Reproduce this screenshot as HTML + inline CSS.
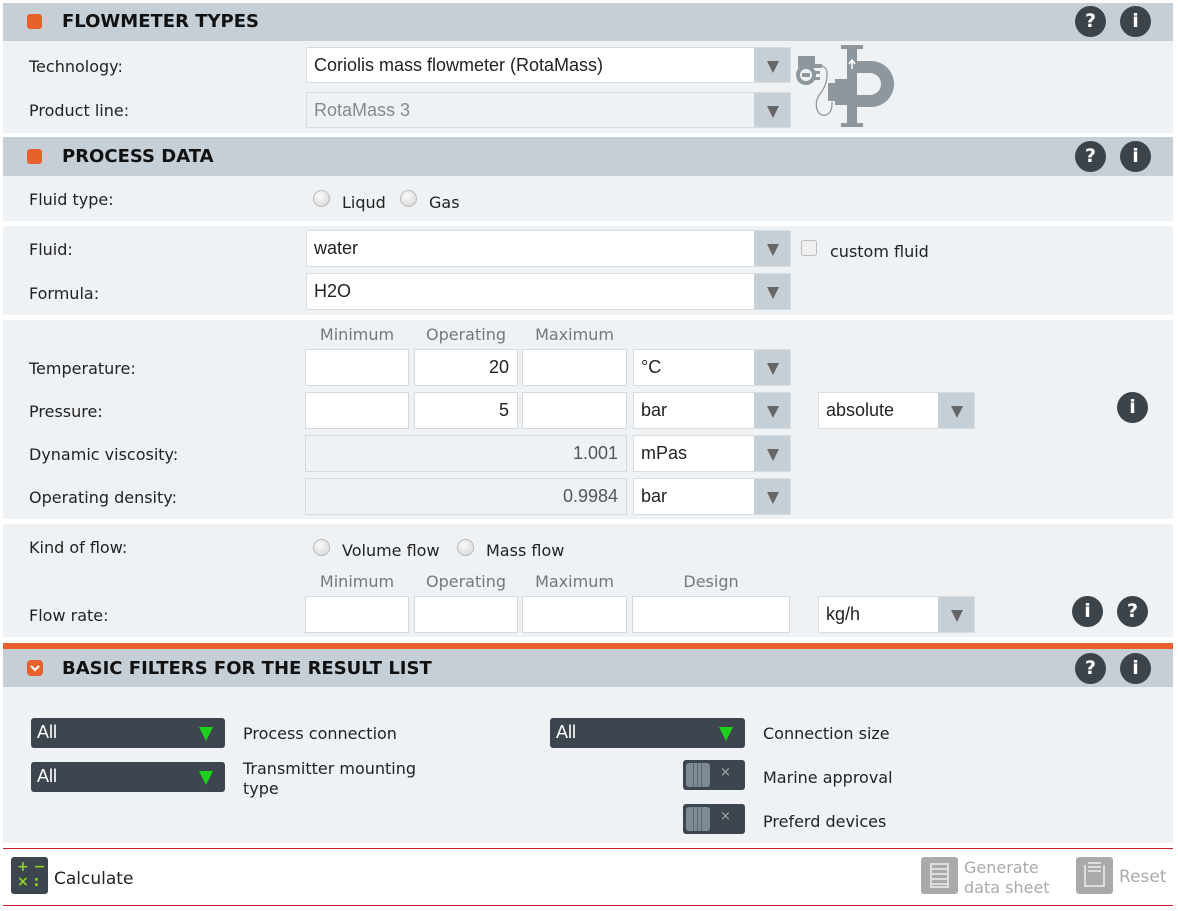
<!DOCTYPE html>
<html><head><style>
*{box-sizing:border-box;margin:0;padding:0}
body{width:1178px;height:911px;background:#fff;font-family:"DejaVu Sans","Liberation Sans",sans-serif;font-size:16px;color:#222;position:relative;overflow:hidden}
.a{position:absolute}
.hd{position:absolute;left:3px;width:1170px;background:#c6ced6}
.hd b{position:absolute;left:59px;font-size:18px;font-weight:bold;color:#111;letter-spacing:0}
.sq{position:absolute;left:24px;width:15px;height:15px;background:#e8602c;border-radius:3px}
.bd{position:absolute;left:3px;width:1170px;background:#eef2f5}
.ic{position:absolute;width:31px;height:31px;border-radius:50%;background:#3c4349;color:#fff;font:bold 19px "DejaVu Sans",sans-serif;text-align:center;line-height:31px}
.lb{position:absolute;left:29px;font-size:16px;color:#222}
.sel{position:absolute;background:#fff;border:1px solid #d8dde2;font-family:"Liberation Sans",sans-serif;font-size:18px;padding-left:7px;line-height:34px;color:#222}
.sel::after{content:"";position:absolute;right:0;top:0;bottom:0;width:36px;background:#c6ced6}
.sel i{position:absolute;right:11px;top:13px;width:0;height:0;border-left:6px solid transparent;border-right:6px solid transparent;border-top:12px solid #666;z-index:2}
.in{position:absolute;background:#fff;border:1px solid #d3d9de;font-family:"Liberation Sans",sans-serif;font-size:18px;text-align:right;padding-right:8px;line-height:34px;height:37px}
.ro{background:#eef2f5;color:#555}
.cap{position:absolute;font-size:16px;color:#777;text-align:center}
.rd{position:absolute;width:17px;height:17px;border-radius:50%;background:radial-gradient(circle at 40% 35%,#fafafa,#d4d4d4);border:1px solid #bbb}
.dk{position:absolute;background:#3d464e;border-radius:3px;color:#fff;font-family:"Liberation Sans",sans-serif;font-size:18px;padding-left:6px;line-height:28px;height:30px}
.dk i{position:absolute;right:12px;top:9px;border-left:7px solid transparent;border-right:7px solid transparent;border-top:14px solid #1fd11f}
.tg{position:absolute;width:62px;height:30px;background:#3d464e;border-radius:3px}
.tg::before{content:"";position:absolute;left:3px;top:3px;width:24px;height:24px;border-radius:3px;background:#7e8a94;background-image:linear-gradient(90deg,transparent 7px,#5c666e 7px,#5c666e 8px,transparent 8px,transparent 11px,#5c666e 11px,#5c666e 12px,transparent 12px,transparent 15px,#5c666e 15px,#5c666e 16px,transparent 16px)}
.tg::after{content:"×";position:absolute;left:37px;top:5px;color:#aaa;font-size:13px}
</style></head><body>

<div class="hd" style="top:3px;height:38px"><div class="sq" style="top:11px"></div><b style="top:8px">FLOWMETER TYPES</b></div>
<div class="ic" style="left:1075px;top:6px">?</div><div class="ic" style="left:1120px;top:6px">i</div>
<div class="bd" style="top:41px;height:92px"></div>
<div class="lb" style="top:57px">Technology:</div>
<div class="lb" style="top:101px">Product line:</div>
<div class="sel" style="left:306px;top:47px;width:485px;height:36px">Coriolis mass flowmeter (RotaMass)<i></i></div>
<div class="sel" style="left:306px;top:92px;width:485px;height:36px;background:#eef2f5;color:#888">RotaMass 3<i></i></div>
<svg class="a" style="left:795px;top:43px" width="100" height="86" viewBox="0 0 100 86">
<g fill="#8e979e"><rect x="46" y="2" width="22" height="4"/><rect x="52" y="6" width="10" height="76"/><rect x="46" y="80" width="22" height="4"/>
<path d="M62 18 h14 a23 23 0 0 1 0 46 h-14 v-12 h13 a11 11 0 0 0 0 -22 h-13z"/>
<rect x="40" y="36" width="12" height="26"/><rect x="33" y="40" width="7" height="18"/>
<rect x="3" y="13" width="17" height="12"/><circle cx="11" cy="32" r="10"/><rect x="19" y="21" width="8" height="4"/><rect x="20" y="28" width="5" height="3"/><rect x="20" y="34" width="5" height="3"/></g>
<circle cx="11" cy="32" r="6" fill="#eef2f5"/><rect x="7" y="30" width="8" height="4" fill="#8e979e"/>
<path d="M27 23 c8 2 6 18 -2 28 c-8 10 -2 26 8 20 c4 -3 4 -8 4 -12" stroke="#8e979e" stroke-width="1.3" fill="none"/>
<path d="M57 26 v-8 m-3 3 l3 -4 l3 4" stroke="#fff" stroke-width="1.5" fill="none"/>
</svg>

<div class="hd" style="top:137px;height:39px"><div class="sq" style="top:12px"></div><b style="top:9px">PROCESS DATA</b></div>
<div class="ic" style="left:1075px;top:141px">?</div><div class="ic" style="left:1120px;top:141px">i</div>
<div class="bd" style="top:176px;height:45px"></div>
<div class="lb" style="top:190px">Fluid type:</div>
<div class="rd" style="left:313px;top:190px"></div><div class="a" style="left:342px;top:193px">Liqud</div>
<div class="rd" style="left:400px;top:190px"></div><div class="a" style="left:429px;top:193px">Gas</div>

<div class="bd" style="top:226px;height:89px"></div>
<div class="lb" style="top:240px">Fluid:</div>
<div class="lb" style="top:284px">Formula:</div>
<div class="sel" style="left:306px;top:230px;width:485px;height:37px">water<i></i></div>
<div class="sel" style="left:306px;top:273px;width:485px;height:37px">H2O<i></i></div>
<div class="a" style="left:801px;top:240px;width:16px;height:16px;border:1px solid #bbb;border-radius:3px;background:#f0f0f0"></div>
<div class="a" style="left:830px;top:242px">custom fluid</div>

<div class="bd" style="top:320px;height:199px"></div>
<div class="cap" style="left:306px;top:325px;width:102px">Minimum</div>
<div class="cap" style="left:415px;top:325px;width:102px">Operating</div>
<div class="cap" style="left:523px;top:325px;width:103px">Maximum</div>
<div class="lb" style="top:359px">Temperature:</div>
<div class="lb" style="top:402px">Pressure:</div>
<div class="lb" style="top:445px">Dynamic viscosity:</div>
<div class="lb" style="top:488px">Operating density:</div>
<div class="in" style="left:305px;top:349px;width:104px"></div>
<div class="in" style="left:414px;top:349px;width:104px">20</div>
<div class="in" style="left:522px;top:349px;width:105px"></div>
<div class="sel" style="left:633px;top:349px;width:158px;height:37px">°C<i></i></div>
<div class="in" style="left:305px;top:392px;width:104px"></div>
<div class="in" style="left:414px;top:392px;width:104px">5</div>
<div class="in" style="left:522px;top:392px;width:105px"></div>
<div class="sel" style="left:633px;top:392px;width:158px;height:37px">bar<i></i></div>
<div class="sel" style="left:818px;top:392px;width:157px;height:37px">absolute<i></i></div>
<div class="ic" style="left:1117px;top:392px">i</div>
<div class="in ro" style="left:305px;top:435px;width:322px">1.001</div>
<div class="sel" style="left:633px;top:435px;width:158px;height:37px">mPas<i></i></div>
<div class="in ro" style="left:305px;top:478px;width:322px">0.9984</div>
<div class="sel" style="left:633px;top:478px;width:158px;height:37px">bar<i></i></div>

<div class="bd" style="top:524px;height:113px"></div>
<div class="lb" style="top:538px">Kind of flow:</div>
<div class="rd" style="left:313px;top:539px"></div><div class="a" style="left:342px;top:541px">Volume flow</div>
<div class="rd" style="left:457px;top:539px"></div><div class="a" style="left:486px;top:541px">Mass flow</div>
<div class="cap" style="left:306px;top:572px;width:102px">Minimum</div>
<div class="cap" style="left:415px;top:572px;width:102px">Operating</div>
<div class="cap" style="left:523px;top:572px;width:103px">Maximum</div>
<div class="cap" style="left:632px;top:572px;width:158px">Design</div>
<div class="lb" style="top:606px">Flow rate:</div>
<div class="in" style="left:305px;top:596px;width:104px"></div>
<div class="in" style="left:414px;top:596px;width:104px"></div>
<div class="in" style="left:522px;top:596px;width:105px"></div>
<div class="in" style="left:632px;top:596px;width:158px"></div>
<div class="sel" style="left:818px;top:596px;width:157px;height:37px">kg/h<i></i></div>
<div class="ic" style="left:1072px;top:596px">i</div><div class="ic" style="left:1117px;top:596px">?</div>

<div class="a" style="left:3px;top:643px;width:1170px;height:6px;background:#e8602c"></div>
<div class="hd" style="top:649px;height:38px"><div class="sq" style="top:11px;width:16px;height:16px;border-radius:4px"></div><b style="top:9px">BASIC FILTERS FOR THE RESULT LIST</b></div>
<svg class="a" style="left:27px;top:660px" width="16" height="16"><path d="M4 6 l4 4 l4 -4" stroke="#fff" stroke-width="2.2" fill="none"/></svg>
<div class="ic" style="left:1075px;top:653px">?</div><div class="ic" style="left:1120px;top:653px">i</div>
<div class="bd" style="top:687px;height:156px"></div>
<div class="dk" style="left:31px;top:718px;width:194px">All<i></i></div>
<div class="a" style="left:243px;top:724px">Process connection</div>
<div class="dk" style="left:31px;top:762px;width:194px">All<i></i></div>
<div class="a" style="left:243px;top:759px;line-height:20px">Transmitter mounting<br>type</div>
<div class="dk" style="left:550px;top:718px;width:195px">All<i></i></div>
<div class="a" style="left:763px;top:724px">Connection size</div>
<div class="tg" style="left:683px;top:760px"></div>
<div class="a" style="left:763px;top:768px">Marine approval</div>
<div class="tg" style="left:683px;top:804px"></div>
<div class="a" style="left:763px;top:812px">Preferd devices</div>

<div class="a" style="left:3px;top:848px;width:1170px;height:1px;background:#c8232c"></div>
<div class="a" style="left:3px;top:905px;width:1170px;height:1px;background:#c8232c"></div>
<div class="a" style="left:11px;top:857px;width:37px;height:37px;background:#3d464e;border-radius:3px;color:#8bd42a;font:bold 14px 'DejaVu Sans';line-height:15px;padding:3px 0 0 6px">+ −<br>× :</div>
<div class="a" style="left:54px;top:869px;font-size:17px">Calculate</div>
<div class="a" style="left:921px;top:857px;width:37px;height:37px;background:#aaa;border-radius:3px"><div class="a" style="left:9px;top:6px;width:19px;height:25px;border:2px solid #ddd;background:repeating-linear-gradient(#aaa 0 3px,#ddd 3px 5px)"></div></div>
<div class="a" style="left:964px;top:858px;color:#aaa;font-size:16px;line-height:20px">Generate<br>data sheet</div>
<div class="a" style="left:1076px;top:857px;width:37px;height:37px;background:#aaa;border-radius:3px"><div class="a" style="left:8px;top:8px;width:21px;height:22px;border:2px solid #ddd;border-top:none"></div><div class="a" style="left:12px;top:5px;width:13px;height:12px;background:repeating-linear-gradient(#ddd 0 2px,#aaa 2px 4px)"></div></div>
<div class="a" style="left:1119px;top:867px;color:#aaa;font-size:17px">Reset</div>
</body></html>
